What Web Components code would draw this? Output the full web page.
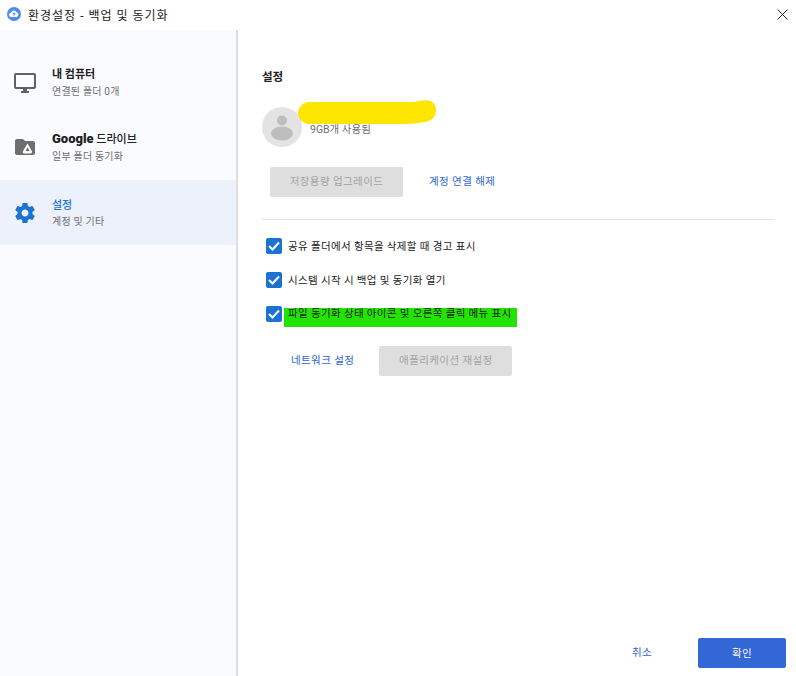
<!DOCTYPE html>
<html lang="ko">
<head>
<meta charset="utf-8">
<title>환경설정 - 백업 및 동기화</title>
<style>
  html, body { margin: 0; height: 100%; background: #fff; }
  body { font-family: "Roboto", "Noto Sans CJK KR", sans-serif; overflow: hidden; }
</style>
</head>
<body>
<prefs-window>
  <prefs-nav-item slot="nav" label="내 컴퓨터" sub="연결된 폴더 0개" icon="monitor"></prefs-nav-item>
  <prefs-nav-item slot="nav" label="Google 드라이브" sub="일부 폴더 동기화" icon="drive"></prefs-nav-item>
  <prefs-nav-item slot="nav" label="설정" sub="계정 및 기타" icon="gear" selected></prefs-nav-item>

  <settings-panel>
    <check-row>공유 폴더에서 항목을 삭제할 때 경고 표시</check-row>
    <check-row>시스템 시작 시 백업 및 동기화 열기</check-row>
    <check-row highlight>파일 동기화 상태 아이콘 및 오른쪽 클릭 메뉴 표시</check-row>
  </settings-panel>
</prefs-window>

<script>
const icons = {
  monitor: `<svg width="24" height="24" viewBox="0 0 24 24" fill="#616161"><path d="M21 2H3c-1.100 0-2 .9-2 2v12c0 1.100.9 2 2 2h7v2H8v2h8v-2h-2v-2h7c1.100 0 2-.9 2-2V4c0-1.100-.9-2-2-2zm0 14H3V4h18v12z"/></svg>`,
  drive: `<svg width="24" height="24" viewBox="0 0 24 24"><path fill="#6e6e6e" d="M10 3H4c-1.100 0-2 .9-2 2v12c0 1.100.9 2 2 2h16c1.100 0 2-.9 2-2V7c0-1.100-.9-2-2-2h-8l-2-2z"/><path fill="#fff" fill-rule="evenodd" d="M14.500 7.500l4.800 8.500-1.300 1.500H10.500L9.500 16zM14.500 11.300L12.500 15h4.100z"/></svg>`,
  gear: `<svg width="24" height="24" viewBox="0 0 24 24" fill="#1a73d0"><path d="M19.430 12.980c.04-.32.07-.64.07-.98s-.03-.66-.07-.98l2.110-1.650c.19-.15.240-.42.120-.64l-2-3.460c-.12-.22-.39-.3-.61-.22l-2.490 1c-.52-.4-1.080-.73-1.690-.98l-.38-2.650C14.460 2.180 14.250 2 14 2h-4c-.25 0-.46.18-.49.420l-.38 2.650c-.61.25-1.170.59-1.690.98l-2.490-1c-.23-.09-.49 0-.61.22l-2 3.460c-.13.220-.07.490.12.640l2.110 1.650c-.04.320-.07.650-.07.980s.03.660.07.980l-2.110 1.650c-.19.150-.24.420-.12.640l2 3.460c.12.220.39.300.61.220l2.490-1c.52.400 1.080.730 1.690.980l.38 2.650c.03.240.24.420.49.420h4c.25 0 .46-.18.49-.42l.38-2.650c.61-.25 1.170-.59 1.690-.98l2.490 1c.23.090.49 0 .61-.22l2-3.460c.12-.22.07-.49-.12-.64l-2.110-1.650zM12 15.500c-1.930 0-3.500-1.570-3.500-3.500s1.570-3.500 3.500-3.500 3.500 1.570 3.500 3.500-1.570 3.500-3.500 3.500z"/></svg>`
}

class PrefsWindow extends HTMLElement {
  constructor() {
    super()
    this.attachShadow({ mode: 'open' })
    this.shadowRoot.innerHTML = `
      <style>
        :host { display: flex; flex-direction: column; width: 796px; height: 676px; }
        .titlebar { display: flex; align-items: center; height: 30px; padding: 0 8px 2px 7px; box-sizing: border-box; flex: none; }
        .titlebar span { margin-left: 7px; font-size: 12px; letter-spacing: 1px; color: #222; flex: 1; }
        .body { display: flex; flex: 1; min-height: 0; }
        nav { width: 236px; padding-top: 20px; background: #fafbfe; border-right: 2px solid #dedede; flex: none; }
        main { flex: 1; min-width: 0; display: flex; }
      </style>
      <div class="titlebar">
        <svg width="14" height="14" viewBox="0 0 16 16"><circle cx="8" cy="8" r="8" fill="#4a8cf0"/><path fill="#fff" d="M4.800 11.300a2.300 2.300 0 0 1-.2-4.600 3.400 3.400 0 0 1 6.400-.8 2.800 2.800 0 0 1 .2 5.400z"/><path fill="#4a8cf0" d="M8 6l2 2.300H8.700v1.500H7.300V8.300H6z"/></svg>
        <span>환경설정 - 백업 및 동기화</span>
        <svg width="11" height="11" viewBox="0 0 11 11"><path d="M.5.5l10 10M10.500.5l-10 10" stroke="#222" fill="none"/></svg>
      </div>
      <div class="body">
        <nav><slot name="nav"></slot></nav>
        <main><slot></slot></main>
      </div>`
  }
}

class PrefsNavItem extends HTMLElement {
  constructor() {
    super()
    this.attachShadow({ mode: 'open' })
    this.shadowRoot.innerHTML = `
      <style>
        :host { display: flex; align-items: center; height: 65px; padding-left: 13px; box-sizing: border-box; }
        :host([selected]) { background: #ecf1fb; }
        .icon { width: 24px; height: 24px; flex: none; margin-right: 15px; }
        .text { padding-top: 1px; }
        .label { font-size: 11px; font-weight: 700; color: #212121; height: 16px; line-height: 16px; white-space: pre; }
        .label b { font-size: 13px; line-height: 1; }
        .label span { font-weight: 500; }
        :host([selected]) .label { color: #1a73d0; font-weight: 500; margin-top: 1px; }
        .sub { font-size: 10px; color: #6f6f6f; line-height: 14px; margin-top: 2px; letter-spacing: .2px; }
        :host([selected]) .sub { margin-top: 1px; }
      </style>
      <div class="icon"></div>
      <div class="text"><div class="label"></div><div class="sub"></div></div>`
    this.shadowRoot.querySelector('.icon').innerHTML = icons[this.getAttribute('icon')]
    const label = this.getAttribute('label')
    const el = this.shadowRoot.querySelector('.label')
    if (label.startsWith('Google ')) {
      el.innerHTML = '<b>Google</b> <span>드라이브</span>'
    } else {
      el.textContent = label
    }
    this.shadowRoot.querySelector('.sub').textContent = this.getAttribute('sub')
  }
}

class PrefsButton extends HTMLElement {
  constructor() {
    super()
    this.attachShadow({ mode: 'open' })
    this.shadowRoot.innerHTML = `
      <style>
        :host { display: inline-flex; align-items: center; justify-content: center; height: 30px; padding-bottom: 4px; border-radius: 2px; font-size: 10.500px; letter-spacing: .4px; box-sizing: border-box; }
        :host([kind=disabled]) { background: #dedede; color: #a3a3a3; }
        :host([kind=link]) { color: #2f66d0; }
        :host([kind=primary]) { background: #3367d6; color: #fff; padding-bottom: 2px; }
      </style>
      <slot></slot>`
  }
}

class CheckRow extends HTMLElement {
  constructor() {
    super()
    this.attachShadow({ mode: 'open' })
    this.shadowRoot.innerHTML = `
      <style>
        :host { display: flex; align-items: center; height: 16px; position: relative; font-size: 10.500px; letter-spacing: .34px; color: #1c1c1c; }
        .box { width: 16px; height: 16px; border-radius: 2px; background: #1a73d0; flex: none; margin-right: 6px; display: flex; align-items: center; justify-content: center; position: relative; z-index: 1; }
        .mark { position: absolute; left: 18px; top: 2px; width: 233px; height: 19px; background: #22e400; display: none; }
        :host([highlight]) .mark { display: block; }
        .text { position: relative; top: -1px; white-space: nowrap; }
        :host([highlight]) .text { top: -2px; }
      </style>
      <div class="mark"></div>
      <div class="box"><svg width="12" height="10" viewBox="0 0 12 10"><path d="M1 5l3.500 3.500L11 1.500" fill="none" stroke="#fff" stroke-width="2"/></svg></div>
      <div class="text"><slot></slot></div>`
  }
}

class SettingsPanel extends HTMLElement {
  constructor() {
    super()
    this.attachShadow({ mode: 'open' })
    this.shadowRoot.innerHTML = `
      <style>
        :host { display: flex; flex-direction: column; flex: 1; padding: 39px 22px 8px 24px; box-sizing: border-box; min-width: 0; }
        h2 { margin: 0 0 22px; font-size: 11.500px; line-height: 16px; font-weight: 700; color: #212121; }
        .account { display: flex; align-items: center; height: 40px; position: relative; }
        .avatar { width: 40px; height: 40px; flex: none; margin-right: 8px; }
        .account p { margin: 0; padding-top: 5px; font-size: 10.500px; color: #6f6f6f; line-height: 14px; align-self: center; }
        .blob { position: absolute; left: 36px; top: -7px; width: 138px; height: 24px; }
        .actions { display: flex; align-items: center; margin-top: 20px; margin-left: 8px; }
        hr { border: 0; height: 1px; background: #e0e0e0; margin: 22px 0 18px; width: 512px; }
        .checks { display: flex; flex-direction: column; gap: 18px; margin-left: 4px; }
        .foot-actions { display: flex; align-items: center; margin: 24px 0 0 29px; }
        .spacer { flex: 1; }
        .dialog { display: flex; justify-content: flex-end; align-items: center; margin-right: -12px; }
      </style>
      <h2>설정</h2>
      <div class="account">
        <svg class="avatar" viewBox="0 0 40 40"><circle cx="20" cy="20" r="20" fill="#e3e3e3"/><circle cx="20" cy="13.500" r="5" fill="#bdbdbd"/><ellipse cx="20" cy="26.500" rx="11" ry="7" fill="#bdbdbd"/></svg>
        <p>9GB개 사용됨</p>
        <svg class="blob" viewBox="0 0 138 24"><path fill="#ffe600" d="M11 2h105c5-1 10-2 14-1.500 5 .5 8 4 8 9.500s-3 10-9 11.500c-6 1.500-14 2.500-22 2.500H12C5 24 0 19 0 13S5 2 11 2z"/></svg>
      </div>
      <div class="actions">
        <prefs-button kind="disabled" style="width:133px">저장용량 업그레이드</prefs-button>
        <prefs-button kind="link" style="margin-left:26px">계정 연결 해제</prefs-button>
      </div>
      <hr>
      <div class="checks"><slot></slot></div>
      <div class="foot-actions">
        <prefs-button kind="link">네트워크 설정</prefs-button>
        <prefs-button kind="disabled" style="width:133px;margin-left:25px">애플리케이션 재설정</prefs-button>
      </div>
      <div class="spacer"></div>
      <div class="dialog">
        <prefs-button kind="link">취소</prefs-button>
        <prefs-button kind="primary" style="width:88px;margin-left:46px">확인</prefs-button>
      </div>`
  }
}

customElements.define('prefs-window', PrefsWindow)
customElements.define('prefs-nav-item', PrefsNavItem)
customElements.define('prefs-button', PrefsButton)
customElements.define('check-row', CheckRow)
customElements.define('settings-panel', SettingsPanel)
</script>
</body>
</html>
